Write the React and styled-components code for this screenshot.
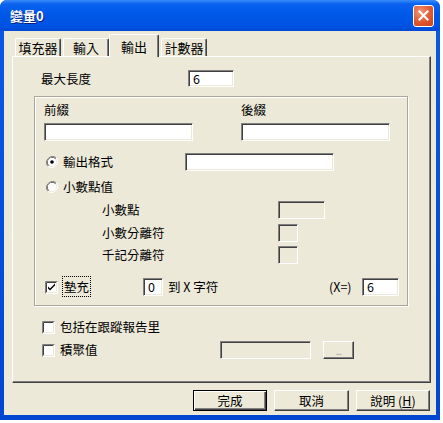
import styled, { createGlobalStyle } from "styled-components";

const Global = createGlobalStyle`
  html, body {
    margin: 0;
    padding: 0;
    background: #fff;
  }
  body {
    font-family: "Noto Sans CJK TC", "Liberation Sans", sans-serif;
    font-size: 12px;
    color: #000;
  }
`;

const FACE = "#ece9d8";

const Window = styled.div`
  width: 440px;
  height: 420px;
  box-sizing: border-box;
  display: flex;
  flex-direction: column;
  background: linear-gradient(#0a5ae6, #0046d2);
  border-radius: 7px 7px 0 0;
  padding: 0 4px 5px 4px;
`;

const TitleBar = styled.div`
  height: 31px;
  display: flex;
  align-items: center;
  justify-content: space-between;
  background: linear-gradient(#3a8cf8 0px, #0a62ef 4px, #0058e8 14px, #0053e2 26px, #0049d6 31px);
  margin: 0 -4px;
  padding-left: 10px;
  padding-right: 6px;
  border-radius: 7px 7px 0 0;
`;

const Title = styled.span`
  color: #fff;
  font-weight: bold;
  font-size: 13px;
  text-shadow: 1px 1px 0 #0a1e7a;
`;

const CloseBtn = styled.div`
  width: 19px;
  height: 20px;
  border: 1px solid #fff;
  border-radius: 3px;
  background: radial-gradient(circle at 35% 30%, #f0967a, #e1572e 55%, #c7401b);
  display: flex;
  align-items: center;
  justify-content: center;
  box-sizing: content-box;
`;

const Client = styled.div`
  flex: 1;
  background: ${FACE};
  display: flex;
  flex-direction: column;
  padding: 3px 5px 0 8px;
`;

const TabStrip = styled.div`
  display: flex;
  align-items: flex-end;
  height: 22px;
  padding-left: 3px;
  position: relative;
  z-index: 1;
`;

const Tab = styled.div`
  width: ${(p) => p.$w}px;
  height: ${(p) => (p.$active ? 23 : 18)}px;
  margin-bottom: ${(p) => (p.$active ? -1 : 0)}px;
  margin-right: 2px;
  margin-left: ${(p) => (p.$active ? -2 : 0)}px;
  box-sizing: border-box;
  background: ${FACE};
  border-top: 1px solid #fff;
  border-left: 1px solid #fff;
  border-right: 1px solid #404040;
  box-shadow: inset -1px 0 #808080;
  border-radius: 2px 2px 0 0;
  display: flex;
  align-items: ${(p) => (p.$active ? "flex-start" : "center")};
  padding-top: ${(p) => (p.$active ? 2 : 0)}px;
  justify-content: center;
  font-size: 13px;
`;

const Panel = styled.div`
  height: 327px;
  box-sizing: border-box;
  border-top: 1px solid #fff;
  border-left: 1px solid #fff;
  border-right: 1px solid #404040;
  border-bottom: 1px solid #404040;
  box-shadow: inset -1px -1px #808080;
  display: flex;
  flex-direction: column;
  padding: 13px 0 0 0;
`;

const Row = styled.div`
  display: flex;
  align-items: center;
  height: ${(p) => p.$h || 18}px;
  margin-top: ${(p) => p.$mt || 0}px;
  padding-left: ${(p) => p.$pl || 0}px;
`;

const Label = styled.span`
  width: ${(p) => (p.$w ? `${p.$w}px` : "auto")};
  flex: none;
  font-size: 12.5px;
  line-height: 14px;
  white-space: nowrap;
`;

const Field = styled.div`
  width: ${(p) => p.$w}px;
  height: ${(p) => p.$h || 18}px;
  box-sizing: border-box;
  flex: none;
  background: ${(p) => (p.$disabled ? FACE : "#fff")};
  border-top: 1px solid #808080;
  border-left: 1px solid #808080;
  border-right: 1px solid #fff;
  border-bottom: 1px solid #fff;
  box-shadow: inset 1px 1px #404040, inset -1px -1px ${FACE};
  padding: 1px 0 0 4px;
  font-size: 12.5px;
  line-height: 14px;
`;

const Group = styled.div`
  margin: 9px 0 0 21px;
  width: 374px;
  height: 210px;
  box-sizing: border-box;
  border: 1px solid #aca899;
  box-shadow: inset 1px 1px #fff, 1px 1px #fff;
  padding: 5px 0 0 9px;
  display: flex;
  flex-direction: column;
`;

const Columns = styled.div`
  display: flex;
  gap: 48px;
`;

const Column = styled.div`
  display: flex;
  flex-direction: column;
  gap: 6px;
`;

const Choice = styled.div`
  display: flex;
  align-items: center;
  gap: 5px;
  width: ${(p) => (p.$w ? `${p.$w}px` : "auto")};
  flex: none;
`;

const Focus = styled.span`
  outline: 1px dotted #000;
  padding: 0 1px;
`;

const Spacer = styled.div`
  flex: none;
  width: ${(p) => p.$w}px;
`;

const SmallBtn = styled.div`
  width: 31px;
  height: 18px;
  box-sizing: border-box;
  border-top: 1px solid #fff;
  border-left: 1px solid #fff;
  border-right: 1px solid #404040;
  border-bottom: 1px solid #404040;
  box-shadow: inset -1px -1px #808080;
  display: flex;
  align-items: center;
  justify-content: center;
  color: #a0a0a0;
  font-size: 10px;
  letter-spacing: -1px;
`;

const ButtonBar = styled.div`
  display: flex;
  justify-content: flex-end;
  gap: 7px;
  margin-top: 7px;
  padding-right: 1px;
`;

const Button = styled.div`
  width: ${(p) => p.$w || 74}px;
  height: 21px;
  box-sizing: border-box;
  display: flex;
  align-items: center;
  justify-content: center;
  font-size: 12.5px;
  border: 1px solid;
  border-color: ${(p) => (p.$default ? "#000" : "#fff #404040 #404040 #fff")};
  box-shadow: ${(p) =>
    p.$default
      ? "inset 1px 1px #fff, inset -1px -1px #404040, inset -2px -2px #808080"
      : "inset -1px -1px #808080"};
`;

const Under = styled.span`
  text-decoration: underline;
`;

const Radio = ({ checked }) => (
  <svg width="12" height="12" viewBox="0 0 12 12">
    <path d="M10.2 1.8 A6 6 0 0 0 1.8 10.2" fill="none" stroke="#808080" strokeWidth="1" />
    <path d="M9.5 2.5 A5 5 0 0 0 2.5 9.5" fill="none" stroke="#404040" strokeWidth="1" />
    <circle cx="6" cy="6" r="4.3" fill="#fff" />
    <path d="M1.8 10.2 A6 6 0 0 0 10.2 1.8" fill="none" stroke="#fff" strokeWidth="1" />
    {checked && <circle cx="6" cy="6" r="1.8" fill="#000" />}
  </svg>
);

const Check = ({ checked }) => (
  <svg width="13" height="13" viewBox="0 0 13 13">
    <rect x="0" y="0" width="13" height="13" fill="#fff" />
    <path d="M0.5 12.5 V0.5 H12.5" fill="none" stroke="#808080" />
    <path d="M1.5 11.5 V1.5 H11.5" fill="none" stroke="#404040" />
    <path d="M1 12.5 H12.5 V1" fill="none" stroke="#fff" />
    <path d="M1.5 11.5 H11.5 V1.5" fill="none" stroke={FACE} />
    {checked && (
      <path d="M3 5.5 L5 7.5 L10 2.5 V4.5 L5 9.5 L3 7.5 Z" fill="#000" />
    )}
  </svg>
);

export default function App() {
  return (
    <>
      <Global />
      <Window>
        <TitleBar>
          <Title>變量0</Title>
          <CloseBtn>
            <svg width="11" height="11" viewBox="0 0 11 11">
              <path d="M1.5 1.5 L9.5 9.5 M9.5 1.5 L1.5 9.5" stroke="#fff" strokeWidth="2" strokeLinecap="square" />
            </svg>
          </CloseBtn>
        </TitleBar>
        <Client>
          <TabStrip>
            <Tab $w={46}>填充器</Tab>
            <Tab $w={46}>輸入</Tab>
            <Tab $w={50} $active>
              輸出
            </Tab>
            <Tab $w={46}>計數器</Tab>
          </TabStrip>
          <Panel>
            <Row $pl={28} $h={17}>
              <Label $w={147}>最大長度</Label>
              <Field $w={46} $h={17}>6</Field>
            </Row>
            <Group>
              <Columns>
                <Column>
                  <Row $h={15}>
                    <Label>前綴</Label>
                  </Row>
                  <Field $w={149} />
                </Column>
                <Column>
                  <Row $h={15}>
                    <Label>後綴</Label>
                  </Row>
                  <Field $w={149} />
                </Column>
              </Columns>
              <Row $mt={12} $pl={2}>
                <Choice $w={139}>
                  <Radio checked />
                  <Label>輸出格式</Label>
                </Choice>
                <Field $w={149} />
              </Row>
              <Row $mt={7} $h={17} $pl={2}>
                <Choice>
                  <Radio />
                  <Label>小數點值</Label>
                </Choice>
              </Row>
              <Row $mt={6} $pl={58}>
                <Label $w={176}>小數點</Label>
                <Field $w={47} $disabled />
              </Row>
              <Row $mt={5} $pl={58}>
                <Label $w={176}>小數分離符</Label>
                <Field $w={20} $disabled />
              </Row>
              <Row $mt={4} $pl={58}>
                <Label $w={176}>千記分離符</Label>
                <Field $w={20} $disabled />
              </Row>
              <Row $mt={14} $pl={1}>
                <Choice $w={98}>
                  <Check checked />
                  <Label>
                    <Focus>墊充</Focus>
                  </Label>
                </Choice>
                <Field $w={20}>0</Field>
                <Spacer $w={5} />
                <Label $w={161}>到 X 字符</Label>
                <Label $w={33}>(X=)</Label>
                <Field $w={37}>6</Field>
              </Row>
            </Group>
            <Row $mt={13} $h={16} $pl={29}>
              <Choice>
                <Check />
                <Label>包括在跟蹤報告里</Label>
              </Choice>
            </Row>
            <Row $mt={6} $pl={29}>
              <Choice $w={178}>
                <Check />
                <Label>積聚值</Label>
              </Choice>
              <Field $w={91} $disabled />
              <Spacer $w={12} />
              <SmallBtn>...</SmallBtn>
            </Row>
          </Panel>
          <ButtonBar>
            <Button $default>完成</Button>
            <Button $w={75}>取消</Button>
            <Button>
              說明 (<Under>H</Under>)
            </Button>
          </ButtonBar>
        </Client>
      </Window>
    </>
  );
}
